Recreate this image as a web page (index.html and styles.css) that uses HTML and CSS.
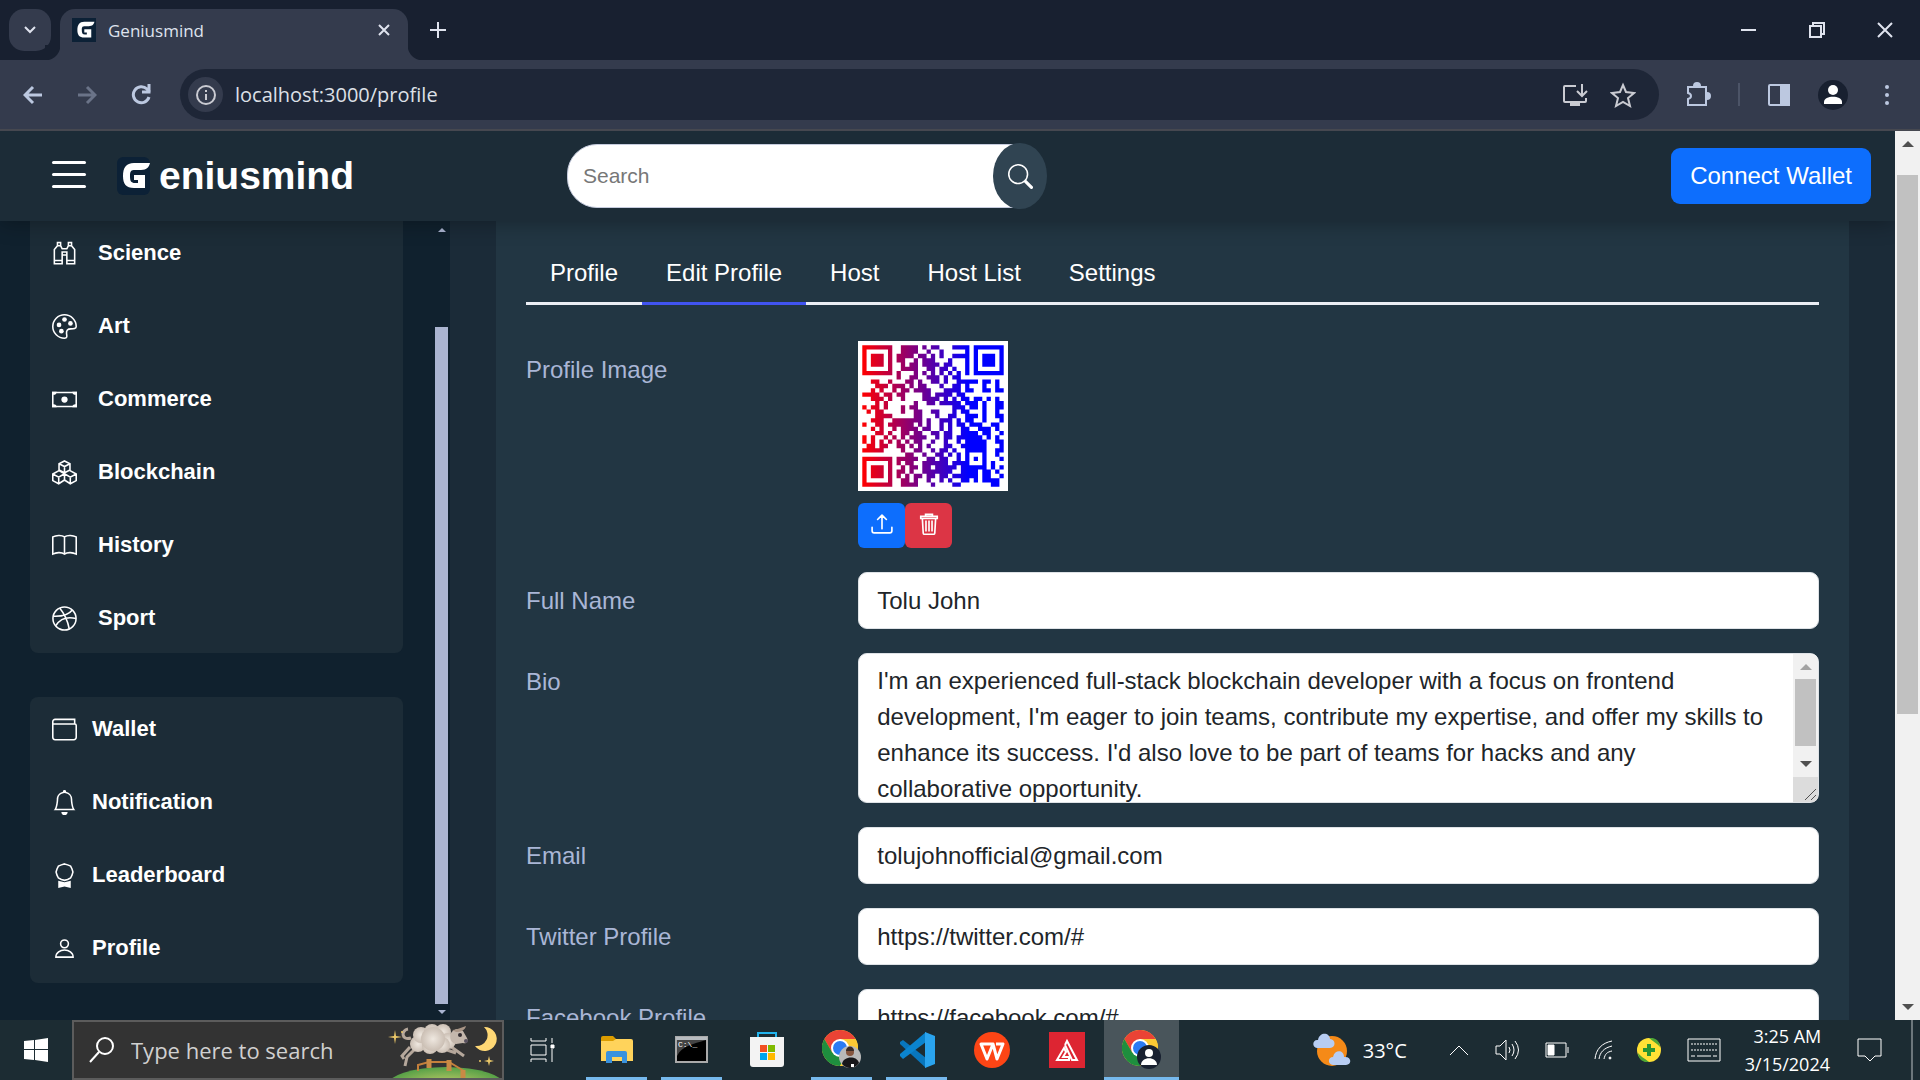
FILE: index.html
```html
<!DOCTYPE html>
<html lang="en">
<head>
    <meta charset="UTF-8">
    <meta name="viewport" content="width=device-width, initial-scale=1.0">
    <title>Geniusmind</title>
    <link rel="stylesheet" href="styles.css">
</head>
<body>
    <!-- shared shapes -->
    <svg class="defs" width="0" height="0">
        <symbol id="logo" viewBox="0 0 33 38">
            <path fill="#fff" d="M33 6H17C9 6 6 11 6 19s3 12 11 12h11V18H17v5h4v3h-3c-4 0-5-2-5-7s1-6 5-6h6c6 0 8-3 9-7z"/>
        </symbol>
        <symbol id="chrome" viewBox="0 0 36 36">
            <circle cx="18" cy="18" r="18" fill="#fcc934"/>
            <path fill="#ea4335" d="M2.4 9A18 18 0 0 1 33.6 9H18L10.2 22.5z"/>
            <path fill="#1e8e3e" d="M2.4 9A18 18 0 0 0 18 36l7.8-13.5H10.2z"/>
            <path fill="#fcc934" d="M33.6 9A18 18 0 0 1 18 36l7.8-13.5L18 9z"/>
            <circle cx="18" cy="18" r="9" fill="#fff"/>
            <circle cx="18" cy="18" r="7" fill="#2b7bf3"/>
        </symbol>
    </svg>

    <div class="tab-strip">
        <button class="tab-search" aria-label="Search tabs">
            <svg width="14" height="14" viewBox="0 0 14 14"><path d="M2 4l5 5 5-5"/></svg>
        </button>
        <div class="tab">
            <svg class="favicon" width="24" height="24"><use href="#logo"/></svg>
            <span class="tab-title">Geniusmind</span>
            <button class="plain" aria-label="Close tab">
                <svg width="14" height="14" viewBox="0 0 14 14"><path d="M2 2l10 10M12 2L2 12"/></svg>
            </button>
        </div>
        <button class="plain new-tab" aria-label="New tab">
            <svg width="18" height="18" viewBox="0 0 18 18"><path d="M9 1v16M1 9h16"/></svg>
        </button>
        <div class="window-buttons">
            <button class="plain" aria-label="Minimize"><svg width="16" height="16" viewBox="0 0 16 16"><path d="M0 8h15"/></svg></button>
            <button class="plain" aria-label="Restore"><svg width="16" height="16" viewBox="0 0 16 16"><path d="M1 4h11v11H1zM4 4V1h11v11h-3"/></svg></button>
            <button class="plain" aria-label="Close"><svg width="16" height="16" viewBox="0 0 16 16"><path d="M1 1l14 14M15 1L1 15"/></svg></button>
        </div>
    </div>

    <div class="toolbar">
        <div class="nav-buttons">
            <button class="plain" aria-label="Back"><svg width="20" height="20" viewBox="0 0 20 20"><path d="M19 10H2M10 2l-8 8 8 8"/></svg></button>
            <button class="plain dim" aria-label="Forward"><svg width="20" height="20" viewBox="0 0 20 20"><path d="M1 10h17M10 2l8 8-8 8"/></svg></button>
            <button class="plain" aria-label="Reload"><svg width="20" height="22" viewBox="0 0 20 22"><path d="M18 13a8 8 0 1 1-2-8l3 3M18 0v8h-7"/></svg></button>
        </div>
        <div class="omnibox">
            <span class="site-info"><svg width="22" height="22" viewBox="0 0 22 22"><circle cx="11" cy="11" r="9"/><path d="M11 10v6M11 6v2"/></svg></span>
            <input class="url" type="text" value="localhost:3000/profile" aria-label="Address">
            <button class="plain" aria-label="Install app"><svg width="26" height="24" viewBox="0 0 26 24"><path d="M14 3H3c-1 0-1 1-1 1v14c0 1 1 1 1 1h20c1 0 1-1 1-1v-3M20 1v11M15 8l5 5 5-5"/><path d="M8 21h10" stroke-width="4"/></svg></button>
            <button class="plain" aria-label="Bookmark"><svg width="26" height="26" viewBox="0 0 26 26"><path d="M13 3l3 7 8 1-6 5 2 8-7-4-7 4 2-8-6-5 8-1z"/></svg></button>
        </div>
        <div class="tool-icons">
            <button class="plain" aria-label="Extensions"><svg width="26" height="26" viewBox="0 0 26 26"><path d="M3 5h18v18H3v-6c4-1 4-5 0-6z"/><path d="M9 4a3 3 0 0 1 6 0zM22 11a3 3 0 0 1 0 6z" fill="#bcc8e0"/></svg></button>
            <span class="divider"></span>
            <button class="plain" aria-label="Side panel"><svg width="24" height="24" viewBox="0 0 24 24"><rect x="2" y="2" width="20" height="20" rx="1"/><path d="M14 2h8v20h-8z" fill="#bcc8e0"/></svg></button>
            <button class="plain" aria-label="You"><svg width="30" height="30" viewBox="0 0 30 30"><g stroke="none"><circle cx="15" cy="15" r="15" fill="#182030"/><g fill="#fff"><circle cx="15" cy="10" r="5"/><path d="M6 24v-2c0-7 18-7 18 0v2z"/></g></g></svg></button>
            <button class="plain" aria-label="Menu"><svg width="24" height="24" viewBox="0 0 24 24"><g stroke="none" fill="#bcc8e0"><circle cx="12" cy="4" r="2"/><circle cx="12" cy="12" r="2"/><circle cx="12" cy="20" r="2"/></g></svg></button>
        </div>
    </div>

    <div class="viewport">
        <div class="site">
            <header class="header">
                <div class="brand">
                    <button class="plain menu-toggle" aria-label="Toggle menu"><span></span><span></span><span></span></button>
                    <a class="logo" href="#"><svg width="33" height="38"><use href="#logo"/></svg><span>eniusmind</span></a>
                </div>
                <form class="search">
                    <input type="text" placeholder="Search" aria-label="Search">
                    <button type="button" aria-label="Search"><svg width="25" height="25" viewBox="0 0 16 16"><path d="M11.742 10.344a6.5 6.5 0 1 0-1.397 1.398h-.001c.03.04.062.078.098.115l3.85 3.85a1 1 0 0 0 1.415-1.414l-3.85-3.85a1.007 1.007 0 0 0-.115-.1zM12 6.5a5.5 5.5 0 1 1-11 0 5.5 5.5 0 0 1 11 0z"/></svg></button>
                </form>
                <button class="btn-wallet">Connect Wallet</button>
            </header>

            <div class="columns">
                <aside class="sidebar">
                    <div class="cards">
                        <nav class="card subjects">
                            <a href="#"><svg viewBox="0 0 16 16"><path d="M3.5 1h2v2h-2zM10.5 1h2v2h-2zM3.5 3l-2 2.5v9h5V9h3v5.5h5v-9l-2-2.5M5.5 3l1 2h3l1-2M6.5 9V7h3v2M1.5 12.5h5M9.5 12.5h5"/></svg>Science</a>
                            <a href="#"><svg viewBox="0 0 16 16"><path d="M8 .5a7.5 7.5 0 1 0 0 15c2 0 1.5-1.5 1.3-3-.2-2 .7-3 2.7-3 2 0 3.5 0 3.5-1.5A7.5 7.5 0 0 0 8 .5z"/><g class="solid"><circle cx="8" cy="3.5" r="1.5"/><circle cx="4.5" cy="7" r="1.5"/><circle cx="11.8" cy="6" r="1.5"/><circle cx="6" cy="11" r="1.5"/></g></svg>Art</a>
                            <a href="#"><svg viewBox="0 0 16 16"><path d="M.5 3.5h15v9H.5z"/><g class="solid"><circle cx="8" cy="8" r="2"/><path d="M0 3h3a2 2 0 0 1-2 2H0zM13 3h3v2h-1a2 2 0 0 1-2-2zM0 13v-2h1a2 2 0 0 1 2 2zM16 13v-2h-1a2 2 0 0 0-2 2z"/></g></svg>Commerce</a>
                            <a href="#"><svg viewBox="0 0 16 16"><path d="M8 .6l3.5 1.8v4L8 8.2 4.5 6.4v-4zM4.5 2.4L8 4.2l3.5-1.8M8 4.2v4M4.5 6.8l3.5 2v4l-3.7 2.4-3.8-2V9zM.5 9l3.800 2L8 8.8M4.3 11v4.2M11.5 6.8l4 2.2v4.2l-3.8 2L8 12.8M15.5 9l-3.8 2L8 8.8M11.700 11v4.2"/></svg>Blockchain</a>
                            <a href="#"><svg viewBox="0 0 16 16"><path d="M8 2.5C6 1 2.5 1.5.5 2.5v11c2-1 5.5-1.5 7.5 0 2-1.5 5.5-1 7.5 0v-11C13.5 1.5 10 1 8 2.5zv11"/></svg>History</a>
                            <a href="#"><svg viewBox="0 0 16 16"><circle cx="8" cy="8" r="7.4"/><path d="M5 1.5c2.5 3 5 8 6 13M1 6.5c5 .2 9.5-.7 12-4M2.500 12.5C5 8.5 9 6.5 15.4 8"/></svg>Sport</a>
                        </nav>
                        <nav class="card account">
                            <a href="#"><svg viewBox="0 0 16 16"><path d="M15 1.5H2A1.5 1.5 0 0 0 .5 3v10A1.5 1.5 0 0 0 2 14.5h12a1.5 1.5 0 0 0 1.5-1.5V5.5a1 1 0 0 0-1-1H1M14.5 1.5v3"/></svg>Wallet</a>
                            <a href="#"><svg viewBox="0 0 16 16"><path class="solid" d="M8 16a2 2 0 0 0 2-2H6a2 2 0 0 0 2 2zM8 1.918l-.797.161A4.002 4.002 0 0 0 4 6c0 .628-.134 2.197-.459 3.742-.16.767-.376 1.566-.663 2.258h10.244c-.287-.692-.502-1.49-.663-2.258C12.134 8.197 12 6.628 12 6a4.002 4.002 0 0 0-3.203-3.92L8 1.917zM14.22 12c.223.447.481.801.78 1H1c.299-.199.557-.553.78-1C2.68 10.2 3 6.88 3 6c0-2.42 1.72-4.44 4.005-4.901a1 1 0 1 1 1.99 0A5.002 5.002 0 0 1 13 6c0 .88.32 4.2 1.22 6z"/></svg>Notification</a>
                            <a href="#"><svg viewBox="0 0 16 16"><path d="M8 .6l2 .6 1.9.8.9 1.8.6 2-.6 2-.9 1.8-1.9.9-2 .6-2-.6-1.9-.9-.9-1.8-.6-2 .6-2L4.1 2 6 1.200z"/><path class="solid" d="M4 11.3l4 1 4-1V16l-4-1-4 1z"/></svg>Leaderboard</a>
                            <a href="#"><svg viewBox="0 0 16 16"><circle cx="8" cy="5" r="2.5"/><path d="M2.5 13.5c0-6 11-6 11 0z"/></svg>Profile</a>
                        </nav>
                    </div>
                    <div class="side-scroll"><i class="up"></i><span></span><i class="down"></i></div>
                </aside>

                <main class="main">
                    <section class="panel">
                        <nav class="tabs">
                            <a href="#">Profile</a>
                            <a href="#" class="active">Edit Profile</a>
                            <a href="#">Host</a>
                            <a href="#">Host List</a>
                            <a href="#">Settings</a>
                        </nav>
                        <form>
                            <div class="row">
                                <label for="image">Profile Image</label>
                                <div class="field">
                                    <svg class="qr" viewBox="-1 -1 35 35" role="img" aria-label="Profile">
                                        <defs>
                                            <linearGradient id="ink" gradientUnits="userSpaceOnUse" x1="0" y1="0" x2="33" y2="0">
                                                <stop offset="0" stop-color="#f00"/>
                                                <stop offset="0.75" stop-color="#00f"/>
                                            </linearGradient>
                                        </defs>
                                        <path id="modules" fill="url(#ink)"/>
                                    </svg>
                                    <div class="image-actions">
                                        <button type="button" class="upload" id="image" aria-label="Upload image"><svg width="22" height="22" viewBox="0 0 16 16"><path fill="none" stroke="#fff" stroke-width="1.2" stroke-linecap="round" stroke-linejoin="round" d="M.8 10.4v2.5c0 1 .6 1.5 1.5 1.5h11.4c.9 0 1.5-.5 1.5-1.5v-2.5M8 11.5V1.6M4.8 4.7L8 1.5l3.2 3.2"/></svg></button>
                                        <button type="button" class="remove" aria-label="Remove image"><svg width="22" height="22" viewBox="0 0 16 16"><path fill="none" stroke="#fff" stroke-width="1.2" d="M2 2.5h12V4H2zM5.5 2V1h5v1M3.2 4.5l.6 10c0 .6.5 1 1 1h6.4c.5 0 1-.4 1-1l.6-10M5.8 5.5v8M8 5.5v8M10.2 5.5v8"/></svg></button>
                                    </div>
                                </div>
                            </div>
                            <div class="row">
                                <label for="name">Full Name</label>
                                <div class="field"><input type="text" id="name" value="Tolu John"></div>
                            </div>
                            <div class="row">
                                <label for="bio">Bio</label>
                                <div class="field bio">
                                    <textarea id="bio">I'm an experienced full-stack blockchain developer with a focus on frontend development, I'm eager to join teams, contribute my expertise, and offer my skills to enhance its success. I'd also love to be part of teams for hacks and any collaborative opportunity.</textarea>
                                    <div class="bio-scroll">
                                        <i class="up"></i><span></span><i class="down"></i>
                                        <svg width="25" height="25" viewBox="0 0 25 25"><path d="M12 23L23 12M18 23l5-5"/></svg>
                                    </div>
                                </div>
                            </div>
                            <div class="row">
                                <label for="email">Email</label>
                                <div class="field"><input type="text" id="email" value="tolujohnofficial@gmail.com"></div>
                            </div>
                            <div class="row">
                                <label for="twitter">Twitter Profile</label>
                                <div class="field"><input type="text" id="twitter" value="https://twitter.com/#"></div>
                            </div>
                            <div class="row">
                                <label for="facebook">Facebook Profile</label>
                                <div class="field"><input type="text" id="facebook" value="https://facebook.com/#"></div>
                            </div>
                        </form>
                    </section>
                </main>
            </div>
        </div>
        <div class="page-scroll"><i class="up"></i><span></span><i class="down"></i></div>
    </div>

    <footer class="taskbar">
        <button class="start" aria-label="Start"><svg width="24" height="24" viewBox="0 0 24 24"><path fill="#fff" d="M0 3l10-1v9H0zM11 2l13-2v11H11zM0 12h10v10L0 21zM11 12h13v12l-13-2z"/></svg></button>
        <div class="task-search">
            <svg width="26" height="26" viewBox="0 0 26 26"><circle cx="16" cy="9" r="8"/><path d="M10 15L1 25"/></svg>
            <input type="text" placeholder="Type here to search" aria-label="Type here to search">
            <svg class="sheep" width="116" height="56" viewBox="0 0 116 56">
                <defs>
                    <radialGradient id="hill"><stop offset="0" stop-color="#d2d36c"/><stop offset="1" stop-color="#57a047"/></radialGradient>
                    <radialGradient id="wool"><stop offset="0" stop-color="#efe8e0"/><stop offset="1" stop-color="#cbbfb4"/></radialGradient>
                </defs>
                <ellipse cx="60" cy="65" rx="60" ry="20" fill="url(#hill)"/>
                <path d="M32 49v-6l11-3h20l15 9" fill="none" stroke="#c5803c" stroke-width="2"/>
                <path d="M43 37v9M63 38v11M77 48v8" fill="none" stroke="#c98a45" stroke-width="5"/>
                <path d="M24 25l-8 9 2 3M28 28l-7 7-2 9M64 24l14 10M58 27l12 4" fill="none" stroke="#b5a79b" stroke-width="3"/>
                <path d="M25 16c-10 3-10-8-3-9" fill="none" stroke="#b5a79b" stroke-width="3"/>
                <g fill="url(#wool)">
                    <circle cx="32" cy="22" r="8"/><circle cx="35" cy="13" r="8"/><circle cx="46" cy="10" r="8"/><circle cx="57" cy="10" r="8"/>
                    <circle cx="62" cy="19" r="8"/><circle cx="56" cy="23" r="8"/><circle cx="44" cy="24" r="8"/><circle cx="47" cy="17" r="12"/>
                </g>
                <path d="M65 11c3-5 9-5 12-2l4 7c2 4-1 6-4 5l-7 1c-5-1-7-6-5-11z" fill="#c4b7ac"/>
                <path d="M66 8c4 0 8-2 14-4-1 4-5 6-10 6z" fill="#a99586"/>
                <circle cx="74" cy="13" r="2" fill="#322c30"/><circle cx="80" cy="19" r="2" fill="#57505e"/>
                <path d="M98 5a12 12 0 1 1-9 19 11 11 0 0 0 9-19z" fill="#ffd875"/>
                <path d="M9 8l1 6 6 1-6 1-1 6-1-6-6-1 6-1zM103 34l1 4 4 1-4 1-1 4-1-4-4-1 4-1z" fill="#ecc869"/>
                <circle cx="16" cy="10" r="1" fill="#ecc869"/><circle cx="94" cy="39" r="1" fill="#ecc869"/>
            </svg>
        </div>
        <div class="apps">
            <button aria-label="Task view"><svg width="26" height="26" viewBox="0 0 26 26" fill="none" stroke="#fff" stroke-width="1"><path d="M2 1v3h15V1M2 8h15v10H2zM2 25v-3h15v3M23 1v5M23 12v13"/><path fill="#fff" d="M22 8h3v3h-3z"/></svg></button>
            <button class="open" aria-label="File Explorer"><svg width="32" height="28" viewBox="0 0 32 28"><path fill="#dc9d00" d="M0 2q0-2 2-2h10l3 3v4H0z"/><path fill="#ffd35b" d="M0 5h12l3-2h15q2 0 2 2v20H0z"/><path fill="#3a92de" d="M5 27V17q0-2 2-2h17q2 0 2 2v10h-5v-6H11v6z"/></svg></button>
            <button class="open" aria-label="Command Prompt"><svg width="34" height="28" viewBox="0 0 34 28"><path fill="#000" stroke="#aaa" stroke-width="2" d="M1 1h31v25H1z"/><path fill="#b7bcc0" d="M1 1h31v3H1z"/><path fill="#444" d="M2 4h29C18 8 7 10 2 20z"/><text x="3" y="11" fill="#fff" font-size="8" font-family="Liberation Mono">C:\_</text></svg></button>
            <button aria-label="Store"><svg width="36" height="36" viewBox="0 0 36 36"><path fill="none" stroke="#22b4ee" stroke-width="2" d="M9 6V1h18v5"/><path fill="#f3f3f3" d="M1 5h34v27q0 3-3 3H4q-3 0-3-3z"/><path fill="#f25022" d="M11 13h7v7h-7z"/><path fill="#7fba00" d="M19 13h7v7h-7z"/><path fill="#00a4ef" d="M11 21h7v7h-7z"/><path fill="#ffb900" d="M19 21h7v7h-7z"/></svg></button>
            <button class="open" aria-label="Chrome, Tolu"><svg width="40" height="40" viewBox="0 0 40 40"><use href="#chrome" width="36" height="36"/><circle cx="28" cy="27" r="11" fill="#b9b9b9"/><circle cx="28" cy="22" r="4" fill="#86563f"/><path fill="#392b26" d="M24 21c0-6 8-6 8 0z"/><path fill="#17171a" d="M20 34c1-8 15-9 17-1-4 6-12 7-17 1z"/><path fill="#fff" d="M29 34h3v3h-3z"/></svg></button>
            <button class="open" aria-label="Visual Studio Code"><svg width="36" height="36" viewBox="0 0 36 36"><path fill="#0876bd" d="M1 10l3-2 23 18v10L1 12z"/><path fill="#0b84cf" d="M1 24l3 3 23-17V0L1 22z"/><path fill="#2aa4ef" d="M26 0l10 4v28l-10 4z"/></svg></button>
            <button aria-label="WPS Office"><svg width="36" height="36" viewBox="0 0 36 36"><circle cx="18" cy="18" r="18" fill="#fd4515"/><path fill="none" stroke="#fff" stroke-width="3" stroke-linejoin="round" d="M19 12H7l6 15 6-15 4 15 6-15h-7"/></svg></button>
            <button aria-label="Amplify"><svg width="36" height="36" viewBox="0 0 36 36"><path fill="#dd2532" d="M0 0h36v36H0z"/><path fill="none" stroke="#fff" stroke-width="2" d="M8 28l7-12 2 4-3 5h6v3zM16 13l2-4 10 19h-5l-7-15"/></svg></button>
            <button class="open current" aria-label="Chrome"><svg width="40" height="40" viewBox="0 0 40 40"><use href="#chrome" width="36" height="36"/><circle cx="27" cy="27" r="12" fill="#182030"/><g fill="#fff"><circle cx="27" cy="23" r="4"/><path d="M19 35c0-9 16-9 16 0z"/></g></svg></button>
        </div>
        <div class="tray">
            <svg width="38" height="34" viewBox="0 0 38 34"><circle cx="19" cy="18" r="15" fill="#f58a18"/><path fill="#b7cdf3" d="M4 15C-2 14 0 6 5 7c2-9 12-7 12-1 6 0 6 9 0 9zM20 32c-6-1-5-8 0-8 2-8 11-7 11 0 8-1 8 8 2 8z"/></svg>
            <span class="temp">33°C</span>
            <svg class="t-up" width="20" height="12" viewBox="0 0 20 12"><path d="M1 11l9-9 9 9"/></svg>
            <svg class="t-vol" width="26" height="24" viewBox="0 0 26 24"><path d="M1 8h4l6-6v20l-6-6H1zM14 9q2 3 0 6M17 6q4 6 0 12M20 3q7 9 0 18"/></svg>
            <svg class="t-bat" width="24" height="16" viewBox="0 0 24 16"><path d="M1 1h20v14H1zM23 5v6"/><path fill="#fff" d="M3 3h6v10H3z"/></svg>
            <svg class="t-wifi" width="20" height="20" viewBox="0 0 20 20"><path d="M2 19C3 9 9 3 19 1M6 19C7 12 11 8 19 6M11 19c1-5 3-7 8-8"/><circle cx="17" cy="18" r="1" fill="#fff"/></svg>
            <svg class="t-plus" width="24" height="24" viewBox="0 0 24 24"><g stroke="none"><circle cx="12" cy="12" r="12" fill="#ffe135"/><path fill="#4ca536" d="M12 0c7-1 11 4 11 9-2-3-6-5-11-9zM12 24c-7 1-11-4-11-9 2 3 6 5 11 9z"/><path fill="#279432" d="M10 6h4v4h4v4h-4v4h-4v-4H6v-4h4z"/></g></svg>
            <svg class="t-key" width="34" height="24" viewBox="0 0 34 24"><path d="M1 1h32v22H1z"/><path stroke-dasharray="2 1" d="M4 6h26M4 12h26"/><path d="M4 18h4M10 18h14M26 18h4"/></svg>
            <div class="clock"><span>3:25 AM</span><span>3/15/2024</span></div>
            <svg class="t-note" width="26" height="24" viewBox="0 0 26 24"><path d="M1 1h23v17h-6l-5 5-5-5H1z"/></svg>
        </div>
    </footer>

    <script>
        // data modules of the code: rows 0-7 and 25-32 start at column 8
        const top8 = [
            '.####.#.##...####', '.####..#..#.....#', '####.##.#.#..####', '##..#.###...#...#',
            '.#.##.####.##...#', '.####..##.##.#..#', '#...#.#.#.#.#.#.#', '#..##..###.#.##..'
        ];
        const middle = [
            '..##..#...##.#..##.#..#####.##.#.', '...###.###.#.##...#..##.#...#..#.',
            '..#.#..#.##.####...####.##..##.##', '####.##.##....##.####.##.........',
            '..###.#..#....####.#.#.##.##.#.#.', '...#.#......#..##.#####.###.#..##',
            '#.##.#...#.##........###.##.#..##', '.#.##....#..##..##...#.##...#..#.',
            '...####.....##...#..##..###.#..##', '..###..#######.#..###.#.##..#...#',
            '#..##.######.#.#..#.#.##.###..##.', '..#.#..#.####.##..#.#..##..###.#.',
            '...##.#..##.##..##.##..####.##..#', '#.#..#.#.#.####..#.##.######.#.#.',
            '#.#.#.#.#.#.##..#..#..#.#####..##', '.##.##..##.#.#.#...##..######...#',
            '#####....#..##..#.##.#..#####..##'
        ];
        const bottom8 = [
            '..##..#..##.#.#.#...#..#.', '#####..##.##..#.#.#.#...#', '#.##..######.####...#.#..',
            '.#.##.##.#####.######.#.#', '##.#..#######..####.##.#.', '#.#.##.##.##.######.##..#',
            '.##.#..#..#.#..##.#.####.', '.####...#....##.......##.'
        ];
        let d = '';

        function addRow(row, x0, y) {
            [...row].forEach((c, i) => {
                if (c === '#') d += `M${x0 + i} ${y}h1v1h-1z`;
            });
        }

        function addFinder(x, y) {
            d += `M${x} ${y}h7v7h-7zM${x + 1} ${y + 1}v5h5v-5zM${x + 2} ${y + 2}h3v3h-3z`;
        }

        top8.forEach((row, i) => addRow(row, 8, i));
        middle.forEach((row, i) => addRow(row, 0, i + 8));
        bottom8.forEach((row, i) => addRow(row, 8, i + 25));
        addFinder(0, 0);
        addFinder(26, 0);
        addFinder(0, 26);
        document.getElementById('modules').setAttribute('d', d);
    </script>
</body>
</html>
```
FILE: styles.css
```css
* {
    margin: 0;
    padding: 0;
    box-sizing: border-box;
}

body {
    height: 100vh;
    display: flex;
    flex-direction: column;
    overflow: hidden;
    background: #1b2b38;
    font-family: 'Liberation Sans', Arial, sans-serif;
    font-size: 24px;
}

svg {
    display: block;
    flex-shrink: 0;
}

.defs {
    position: absolute;
}

button {
    border: none;
    font-family: inherit;
    cursor: pointer;
}

a {
    color: #fff;
    text-decoration: none;
}

.plain {
    background: none;
    display: flex;
    align-items: center;
    justify-content: center;
}

/* browser tabs */
.tab-strip {
    height: 60px;
    flex-shrink: 0;
    display: flex;
    background: #182030;
    padding: 9px 0 0 9px;
    font-family: 'Open Sans', sans-serif;
}

.tab-strip svg,
.toolbar svg {
    fill: none;
    stroke: #dfe3ee;
    stroke-width: 2;
}

.tab-strip .favicon {
    stroke: none;
    background: #0c2136;
}

.tab-search {
    width: 42px;
    height: 42px;
    border-radius: 15px;
    background: #343b4d;
    display: flex;
    align-items: center;
    justify-content: center;
}

.tab {
    position: relative;
    width: 348px;
    margin-left: 9px;
    padding: 0 17px 9px 12px;
    display: flex;
    align-items: center;
    background: #343b4d;
    border-radius: 15px 15px 0 0;
}

.tab::before,
.tab::after {
    content: '';
    position: absolute;
    bottom: 0;
    width: 15px;
    height: 15px;
}

.tab::before {
    right: 100%;
    background: radial-gradient(circle at 0 0, #182030 15px, #343b4d 16px);
}

.tab::after {
    left: 100%;
    background: radial-gradient(circle at 100% 0, #182030 15px, #343b4d 16px);
}

.tab-title {
    flex: 1;
    margin-left: 12px;
    color: #dfe3ee;
    font-size: 17px;
}

.new-tab {
    width: 60px;
    height: 42px;
}

.window-buttons {
    display: flex;
    gap: 52px;
    margin-left: auto;
    padding: 0 27px 9px 0;
}

/* browser toolbar */
.toolbar {
    height: 71px;
    flex-shrink: 0;
    display: flex;
    align-items: center;
    padding: 0 21px 0 23px;
    background: #343b4d;
    border-bottom: 2px solid #464850;
}

.toolbar svg {
    stroke: #bcc8e0;
}

.nav-buttons {
    width: 157px;
    display: flex;
    gap: 34px;
}

.nav-buttons svg {
    stroke-width: 3;
}

.dim {
    opacity: 0.4;
}

.omnibox {
    flex: 1;
    height: 51px;
    display: flex;
    align-items: center;
    gap: 22px;
    padding: 0 23px 0 8px;
    border-radius: 26px;
    background: #1e2637;
}

.omnibox svg {
    stroke: #cacbd2;
}

.site-info {
    width: 35px;
    height: 35px;
    display: grid;
    place-items: center;
    border-radius: 50%;
    background: #343b4d;
}

.url {
    flex: 1;
    margin-left: -10px;
    border: none;
    background: none;
    color: #dde0e7;
    font-family: 'Open Sans', sans-serif;
    font-size: 20px;
}

.tool-icons {
    display: flex;
    align-items: center;
    gap: 27px;
    margin-left: 26px;
}

.divider {
    width: 2px;
    height: 23px;
    background: #4c5467;
}

/* page */
.viewport {
    flex: 1;
    min-height: 0;
    display: flex;
}

.site {
    flex: 1;
    display: flex;
    flex-direction: column;
    overflow: hidden;
}

.header {
    position: relative;
    z-index: 1;
    height: 90px;
    flex-shrink: 0;
    display: flex;
    align-items: center;
    padding: 0 24px 0 52px;
    background: #1c2c37;
    box-shadow: 0 2px 20px rgba(0, 0, 0, 0.3);
}

.brand {
    width: 515px;
    display: flex;
    align-items: center;
    gap: 31px;
}

.menu-toggle {
    width: 34px;
    flex-direction: column;
    gap: 9px;
    padding-bottom: 4px;
}

.menu-toggle span {
    width: 34px;
    height: 3px;
    border-radius: 2px;
    background: #fff;
}

.logo {
    display: flex;
    align-items: center;
    gap: 9px;
    font-size: 39px;
    font-weight: bold;
}

.logo svg {
    border-radius: 6px;
    background: #0c2136;
}

.search {
    display: flex;
    align-items: center;
    width: 480px;
}

.search input {
    flex: 1;
    height: 64px;
    margin-right: -28px;
    padding: 0 15px;
    border: 1px solid #c5cbdd;
    border-radius: 30px 0 0 30px;
    font-family: inherit;
    font-size: 21px;
}

.search input::placeholder {
    color: #777;
}

.search button {
    width: 54px;
    height: 66px;
    display: grid;
    place-items: center;
    border-radius: 50%;
    background: #304452;
}

.search svg {
    fill: #fff;
}

.btn-wallet {
    height: 56px;
    margin-left: auto;
    padding: 0 19px;
    border-radius: 9px;
    background: #0d6efd;
    color: #fff;
    font-size: 24px;
}

.columns {
    flex: 1;
    min-height: 0;
    display: flex;
}

.sidebar {
    width: 450px;
    display: flex;
    justify-content: space-between;
    padding: 0 2px 0 30px;
    background: #10212e;
}

.cards {
    width: 373px;
    display: flex;
    flex-direction: column;
    gap: 44px;
}

.card {
    display: flex;
    flex-direction: column;
    gap: 39px;
    padding: 15px 22px 18px;
    border-radius: 8px;
    background: #1c2c37;
}

.subjects {
    border-radius: 0 0 8px 8px;
}

.card a {
    height: 34px;
    display: flex;
    align-items: center;
    gap: 21px;
    font-size: 22px;
    font-weight: bold;
}

.account a {
    gap: 15px;
}

.card svg {
    width: 25px;
    height: 25px;
    fill: none;
    stroke: #fff;
}

.card .solid {
    fill: #fff;
    stroke: none;
}

.up,
.down {
    border: 6px solid transparent;
    border-top-width: 0;
    border-bottom-color: #505050;
}

.down {
    border-top: 6px solid #505050;
    border-bottom-width: 0;
}

.side-scroll {
    width: 13px;
    display: flex;
    flex-direction: column;
    align-items: center;
    padding: 7px 0 6px;
}

.side-scroll .up,
.side-scroll .down {
    border-width: 0 4px 4px;
    border-bottom-color: #aab4d0;
}

.side-scroll .down {
    border-width: 4px 4px 0;
    border-top-color: #aab4d0;
}

.side-scroll span {
    width: 13px;
    flex: 1;
    margin: 95px 0 6px;
    background: #aab4d0;
}

.main {
    flex: 1;
    padding: 0 46px;
    overflow: hidden;
}

.panel {
    min-height: 100%;
    padding: 24px 30px 30px;
    background: #223643;
}

.tabs {
    display: flex;
    margin-bottom: 36px;
    box-shadow: inset 0 -3px #ebeef4;
}

.tabs a {
    height: 60px;
    padding: 0 24px;
    line-height: 56px;
}

.tabs .active {
    border-bottom: 3px solid #4154f1;
}

.row {
    display: flex;
    margin: 0 -18px 24px;
}

.row label {
    width: 25%;
    padding: 11px 18px 10px;
    line-height: 36px;
    color: #aab6d6;
}

.field {
    width: 75%;
    padding: 0 18px;
}

.field input,
.field textarea {
    display: block;
    width: 100%;
    height: 57px;
    padding: 9px 18px;
    border: 1px solid #dee2e6;
    border-radius: 9px;
    background: #fff;
    color: #212529;
    font-family: inherit;
    font-size: 24px;
    line-height: 36px;
}

.field textarea {
    height: 150px;
    padding-right: 44px;
    overflow: hidden;
    resize: none;
}

.bio {
    position: relative;
}

.bio-scroll {
    position: absolute;
    top: 1px;
    right: 19px;
    bottom: 1px;
    width: 25px;
    display: flex;
    flex-direction: column;
    align-items: center;
    padding-top: 10px;
    background: #f1f1f1;
    border-radius: 0 6px 6px 0;
    overflow: hidden;
}

.bio-scroll .up {
    border-bottom-color: #a3a3a3;
}

.bio-scroll span {
    width: 21px;
    height: 67px;
    margin: 9px 0 15px;
    background: #c1c1c1;
}

.bio-scroll svg {
    margin-top: auto;
    background: #dcdcdc;
    stroke: #505050;
    stroke-width: 1;
}

.qr {
    width: 150px;
    height: 150px;
    background: #fff;
}

.image-actions {
    display: flex;
    margin-top: 12px;
}

.image-actions button {
    width: 47px;
    height: 45px;
    display: grid;
    place-items: center;
    padding-bottom: 3px;
    border-radius: 6px;
}

.image-actions .upload {
    background: #0d6efd;
}

.image-actions .remove {
    background: #dc3545;
}

.page-scroll {
    width: 25px;
    display: flex;
    flex-direction: column;
    align-items: center;
    padding: 10px 0;
    background: #f1f1f1;
}

.page-scroll span {
    width: 21px;
    height: 62%;
    margin: 28px 0 auto;
    background: #c1c1c1;
}

/* taskbar */
.taskbar {
    height: 60px;
    flex-shrink: 0;
    display: flex;
    background: #1c2c33;
    font-family: 'Open Sans', sans-serif;
}

.start {
    width: 72px;
    display: grid;
    place-items: center;
    background: none;
}

.task-search {
    width: 432px;
    display: flex;
    align-items: center;
    gap: 16px;
    padding-left: 15px;
    border: 2px solid #5c5c5c;
    background: #333;
    fill: none;
    stroke: #fff;
    stroke-width: 2;
}

.task-search input {
    flex: 1;
    min-width: 0;
    border: none;
    background: none;
    font-family: inherit;
    font-size: 22px;
}

.task-search input::placeholder {
    color: #d0d0d0;
}

.sheep {
    stroke: none;
}

.apps {
    display: flex;
}

.apps button {
    width: 75px;
    display: grid;
    place-items: center;
    background: linear-gradient(#76b9ed, #76b9ed) bottom / 0 3px no-repeat;
}

.apps .open {
    background-size: 61px 3px;
}

.apps .current {
    background-color: #49555b;
    background-size: 100% 3px;
}

.tray {
    display: flex;
    align-items: center;
    margin-left: auto;
    margin-right: 7px;
    padding-right: 28px;
    border-right: 2px solid #6c777c;
    color: #fff;
    fill: none;
    stroke: #fff;
    stroke-width: 1;
}

.tray > svg:first-child {
    stroke: none;
}

.temp {
    margin: 0 42px 0 12px;
    font-size: 20px;
}

.t-up,
.t-plus {
    margin-right: 26px;
}

.t-vol,
.t-bat,
.t-wifi,
.t-key {
    margin-right: 24px;
}

.clock {
    display: flex;
    flex-direction: column;
    align-items: center;
    margin-right: 27px;
    font-size: 18px;
    line-height: 28px;
}
```
